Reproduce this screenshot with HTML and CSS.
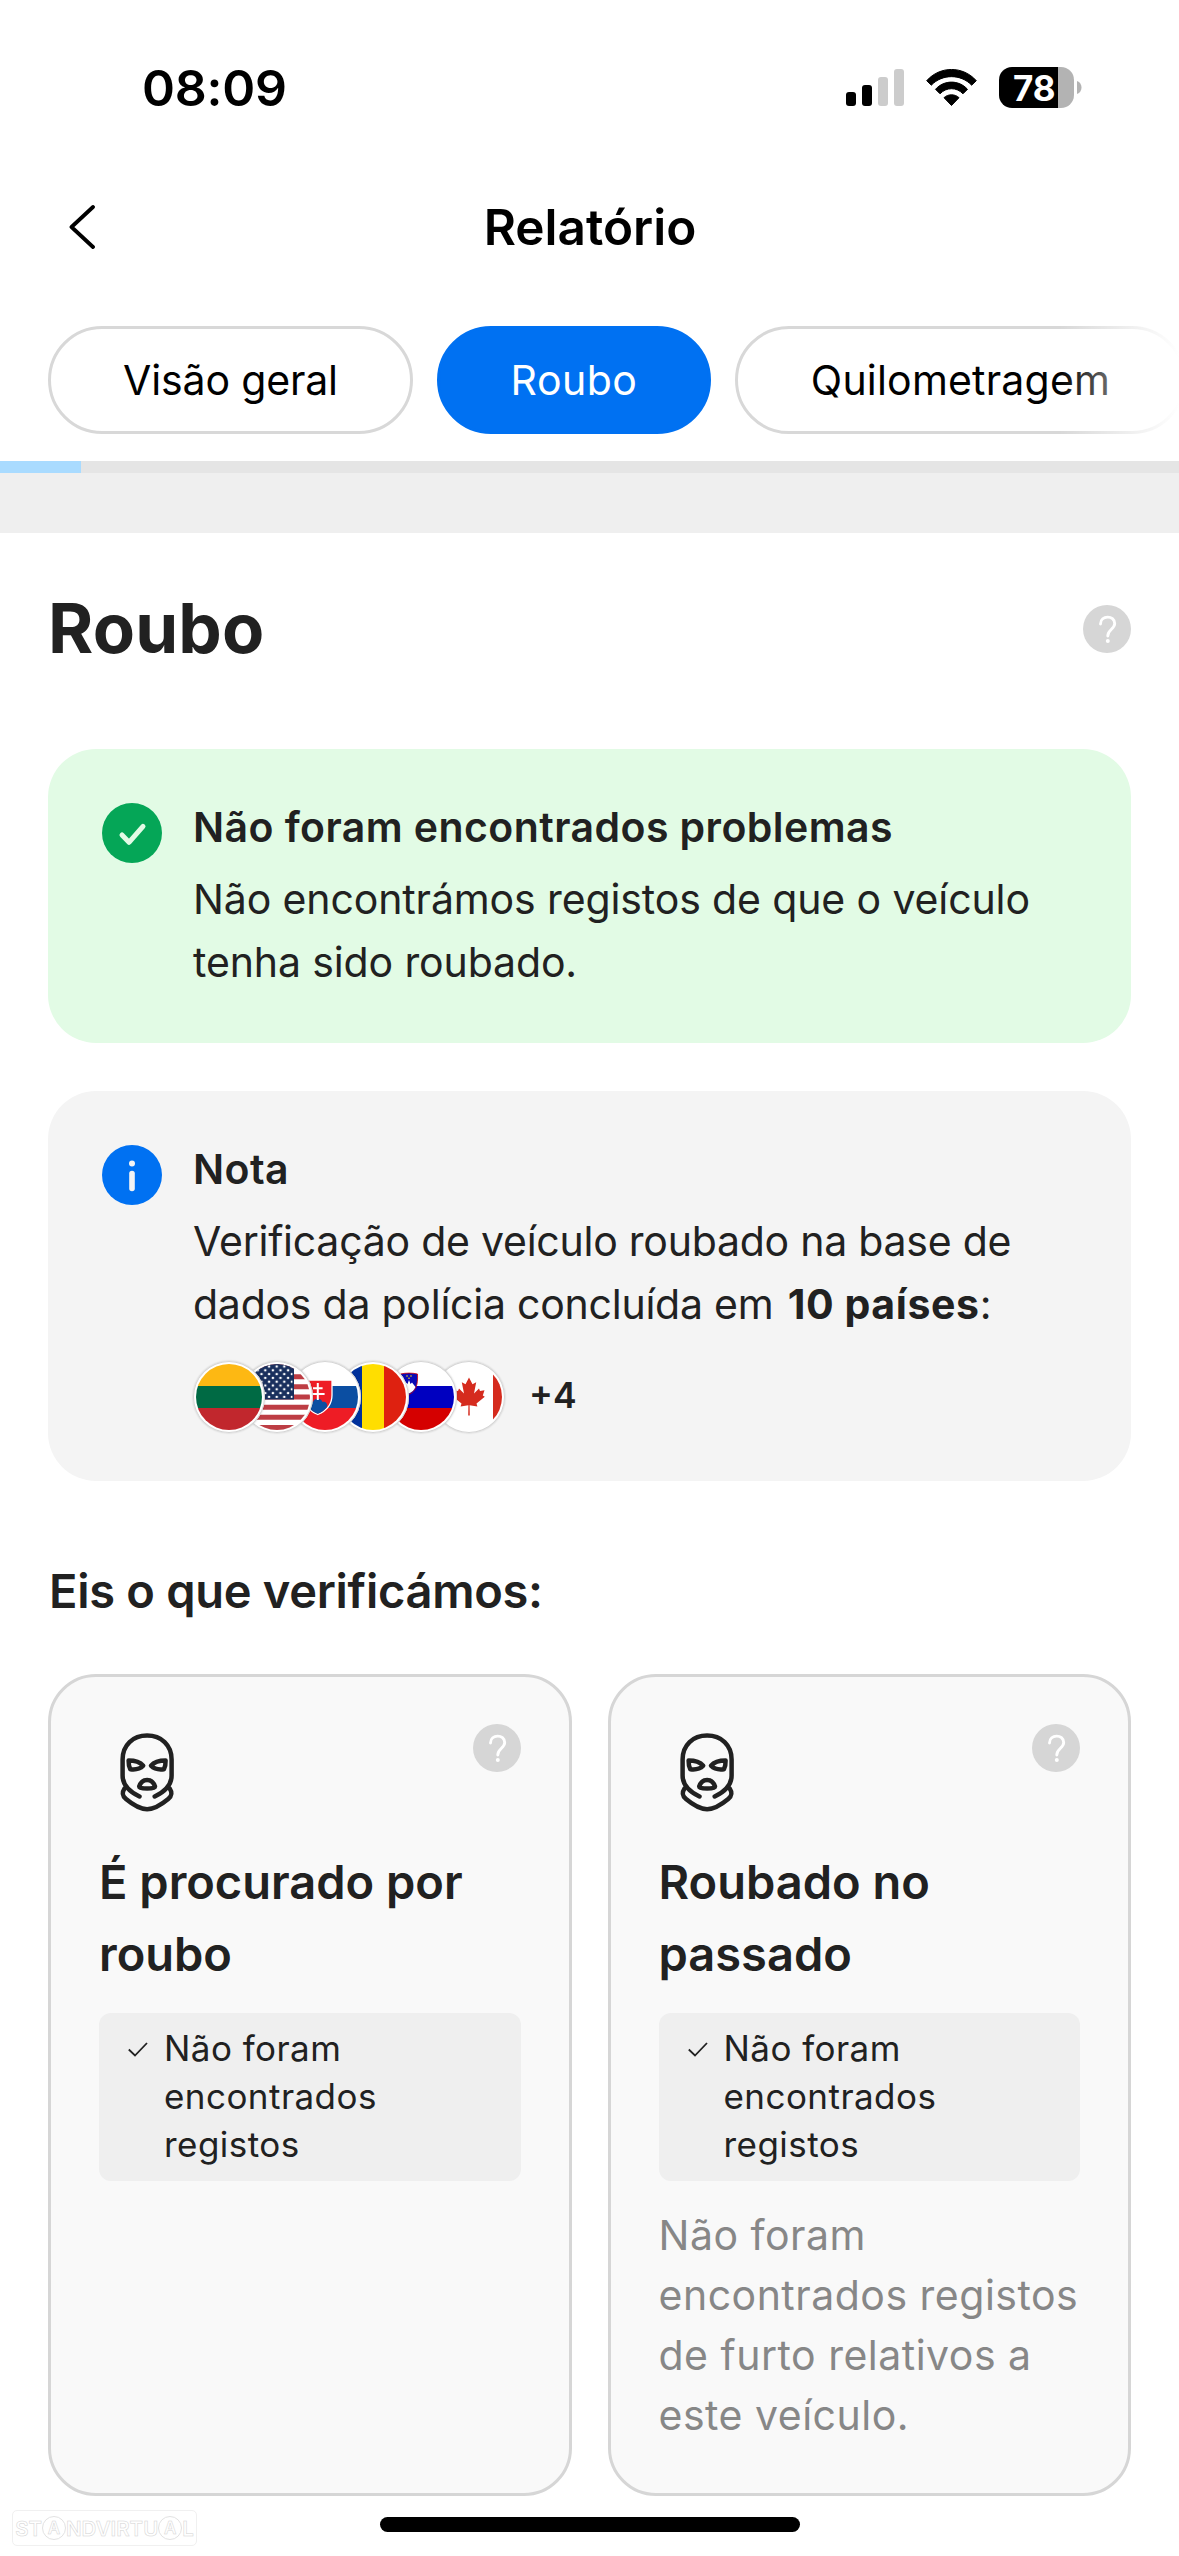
FILE: index.html
```
<!DOCTYPE html>
<html lang="pt">
<head>
<meta charset="utf-8">
<title>Relatório</title>
<link rel="stylesheet" href="styles.css">
</head>
<body>
<svg class="defs" width="0" height="0" aria-hidden="true">
  <defs>
    <clipPath id="flag-clip"><circle cx="36" cy="36" r="33"/></clipPath>
    <pattern id="stars" width="7.6" height="7.6" patternUnits="userSpaceOnUse" x="3.4" y="3.6">
      <circle cx="1.9" cy="1.9" r="1.3" fill="#fff"/><circle cx="5.7" cy="5.7" r="1.3" fill="#fff"/>
    </pattern>
    <symbol id="help" viewBox="0 0 48 48">
      <circle cx="24" cy="24" r="24" fill="#d6d6d6"/>
      <path d="M17.500 19C17.500 10 31.700 9.800 31.700 18.600C31.700 24.200 24.800 24.500 24.800 31" fill="none" stroke="#fff" stroke-width="2.900" stroke-linecap="round"/>
      <circle cx="24.800" cy="36" r="2" fill="#fff"/>
    </symbol>
    <symbol id="balaclava" viewBox="0 0 96 96">
      <g fill="none" stroke="#212121" stroke-width="4.500" stroke-linecap="round" stroke-linejoin="round">
        <path d="M40.500 72.500C31 68 23.600 61 23.600 51.500V35.500C23.600 21 34 11.500 48.100 11.500S72.600 21 72.600 35.500V51.500C72.600 61 65.200 68 55.700 72.500"/>
        <path d="M25.500 64.500C22.500 69 23.500 72 27 75C33 80 42 85.200 48.100 85.200S63.200 80 69.200 75C72.700 72 73.700 69 70.700 64.500"/>
        <path d="M29.600 36.500C35 36.500 41 38 44.200 41.700C41 45 36 45.800 31.300 45.200C30 42.500 29.500 39.500 29.600 36.500Z"/>
        <path d="M66.600 36.500C61.200 36.500 55.200 38 52 41.700C55.200 45 60.200 45.800 64.900 45.200C66.200 42.500 66.700 39.500 66.600 36.500Z"/>
        <path d="M40.200 62.500C41.500 58.500 44.500 56.100 48.100 56.100S54.700 58.500 56 62.500C56 65.300 40.200 65.300 40.200 62.500Z"/>
      </g>
    </symbol>
    <symbol id="tick" viewBox="0 0 20 15">
      <path d="M0.800 7.500L7 13.500L19 1" fill="none" stroke="#212121" stroke-width="1.800"/>
    </symbol>
  </defs>
</svg>

<header class="topbar">
  <div class="status">
    <span class="time">08:09</span>
    <div class="indicators">
      <svg class="signal" viewBox="0 0 58 37">
        <rect x="0" y="23" width="10" height="14" rx="3"/>
        <rect x="16" y="16" width="10" height="21" rx="3"/>
        <rect x="32" y="8" width="10" height="29" rx="3" fill="#ccc"/>
        <rect x="48" y="0" width="10" height="37" rx="3" fill="#ccc"/>
      </svg>
      <svg class="wifi" viewBox="0 0 51 37">
        <path d="M0.700 11.700C14 -3.300 37 -3.300 50.300 11.700L45.700 16.200C34.800 4.800 16.200 4.800 5.300 16.200Z" stroke="#000" stroke-linejoin="round"/>
        <path d="M9.500 20.300C18.200 10.700 32.800 10.700 41.500 20.300L37 24.800C30.600 18 20.400 18 14 24.800Z" stroke="#000" stroke-linejoin="round"/>
        <path d="M18 28.700C22 24.800 29 24.800 33 28.700L25.500 36.500Z" stroke="#000" stroke-linejoin="round"/>
      </svg>
      <div class="battery">
        <span class="battery-level">78</span>
        <svg class="battery-nub" viewBox="0 0 5 13"><path d="M0 0C6 2 6 11 0 13Z" fill="#b3b3b3"/></svg>
      </div>
    </div>
  </div>
  <nav class="navbar">
    <svg class="back" viewBox="0 0 26 44"><path d="M24 2L2.500 22L24 42" fill="none" stroke="#000" stroke-width="3.800" stroke-linecap="round" stroke-linejoin="round"/></svg>
    <h1 class="nav-title">Relatório</h1>
  </nav>
  <div class="tabs">
    <span class="tab tab-overview">Visão geral</span>
    <span class="tab tab-active">Roubo</span>
    <span class="tab tab-mileage">Quilometragem</span>
  </div>
  <div class="progress"><div class="progress-value"></div></div>
</header>
<div class="divider"></div>

<main class="section">
  <div class="section-head">
    <h2 class="section-title">Roubo</h2>
    <svg class="help"><use href="#help"/></svg>
  </div>

  <div class="notice notice-ok">
    <svg class="notice-icon" viewBox="0 0 60 60"><circle cx="30" cy="30" r="30" fill="#05a657"/><path d="M20 32L27 39.300L41 23.300" fill="none" stroke="#e3fbe6" stroke-width="5" stroke-linecap="round" stroke-linejoin="round"/></svg>
    <div class="notice-text">
      <h3 class="notice-title">Não foram encontrados problemas</h3>
      <p class="notice-body">Não encontrámos registos de que o veículo tenha sido roubado.</p>
    </div>
  </div>

  <div class="notice notice-info">
    <svg class="notice-icon" viewBox="0 0 60 60"><circle cx="30" cy="30" r="30" fill="#0071f2"/><circle cx="30" cy="18.500" r="3" fill="#f4f4f4"/><rect x="27.200" y="25.700" width="5.600" height="20.600" rx="2.800" fill="#f4f4f4"/></svg>
    <div class="notice-text">
      <h3 class="notice-title">Nota</h3>
      <p class="notice-body notice-body-tight">Verificação de veículo roubado na base de dados da polícia concluída em <b>10 países</b>:</p>
      <div class="flags">
        <svg class="flag" viewBox="0 0 72 72"><g clip-path="url(#flag-clip)"><path fill="#fdb813" d="M0 0h72v25H0z"/><path fill="#006a44" d="M0 25h72v22H0z"/><path fill="#c1272d" d="M0 47h72v25H0z"/></g></svg>
        <svg class="flag" viewBox="0 0 72 72"><g clip-path="url(#flag-clip)"><path fill="#fff" d="M0 0h72v72H0z"/><path stroke="#bd3d44" stroke-width="5.080" d="M0 5.500h72M0 15.700h72M0 25.800h72M0 36h72M0 46.200h72M0 56.300h72M0 66.500h72"/><path fill="#192f5d" d="M0 0h53v38.500H0z"/><path fill="url(#stars)" d="M0 3h51.500v34H0z"/></g></svg>
        <svg class="flag" viewBox="0 0 72 72"><g clip-path="url(#flag-clip)"><path fill="#fff" d="M0 0h72v25H0z"/><path fill="#0b4ea2" d="M0 25h72v22H0z"/><path fill="#ee1c25" d="M0 47h72v25H0z"/><path fill="#ee1c25" stroke="#fff" stroke-width="1.300" d="M14.500 19H43V34C43 44 37 50 28.800 53.500C20.500 50 14.500 44 14.500 34Z"/><path fill="#0b4ea2" d="M19.500 46C19 41 22.500 40 24 41C25 36.500 32.500 36.500 33.500 41C35 40 39 41 38 46C35.500 49.500 32 51.500 28.800 52.700C25.500 51.500 22 49.500 19.500 46Z"/><path stroke="#fff" stroke-width="2" d="M28.800 22V39M24 27.200H33.600M22 33H35.600"/></g></svg>
        <svg class="flag" viewBox="0 0 72 72"><g clip-path="url(#flag-clip)"><path fill="#00319c" d="M0 0h25v72H0z"/><path fill="#ffde00" d="M25 0h22v72H25z"/><path fill="#de2110" d="M47 0h25v72H47z"/></g></svg>
        <svg class="flag" viewBox="0 0 72 72"><g clip-path="url(#flag-clip)"><path fill="#fff" d="M0 0h72v25H0z"/><path fill="#0000c0" d="M0 25h72v22H0z"/><path fill="#d50000" d="M0 47h72v25H0z"/><path fill="#0a0ab5" stroke="#d50000" stroke-width="0.800" d="M15.500 13C21 11.800 27 11.800 32.500 13C33 24 31 30 24 33.500C17 30 15 24 15.500 13Z"/><path fill="#fff" d="M17.500 26L21 21.500L22.500 23L24 19L25.500 23L27 21.500L30.500 26C29 29.500 27 31 24 32.500C21 31 19 29.500 17.500 26Z"/><g fill="#fd0"><circle cx="22" cy="15" r="0.800"/><circle cx="26" cy="15" r="0.800"/><circle cx="24" cy="17.300" r="0.800"/></g></g></svg>
        <svg class="flag" viewBox="0 0 72 72"><g clip-path="url(#flag-clip)"><path fill="#fff" d="M0 0h72v72H0z"/><path fill="#d52b1e" d="M0 0h12v72H0zM60 0h12v72H60zM36 16.500L32.500 23.200L28.800 21.300L31 32.500L26 27.500L25 30L20.500 29.200L22.200 34.500L20.200 35.800L28.500 42.500L27.600 45.500L35.400 44.200L35.200 54.500H36.800L36.600 44.200L44.400 45.500L43.500 42.500L51.800 35.800L49.800 34.500L51.500 29.200L47 30L46 27.500L41 32.500L43.200 21.300L39.500 23.200Z"/></g></svg>
        <span class="flags-more">+4</span>
      </div>
    </div>
  </div>

  <h3 class="checks-title">Eis o que verificámos:</h3>

  <div class="cards">
    <article class="card">
      <div class="card-head">
        <svg class="card-icon"><use href="#balaclava"/></svg>
        <svg class="help"><use href="#help"/></svg>
      </div>
      <h4 class="card-title">É procurado por roubo</h4>
      <div class="chip"><svg class="chip-tick"><use href="#tick"/></svg><span>Não foram encontrados registos</span></div>
    </article>
    <article class="card">
      <div class="card-head">
        <svg class="card-icon"><use href="#balaclava"/></svg>
        <svg class="help"><use href="#help"/></svg>
      </div>
      <h4 class="card-title">Roubado no passado</h4>
      <div class="chip"><svg class="chip-tick"><use href="#tick"/></svg><span>Não foram encontrados registos</span></div>
      <p class="card-note">Não foram encontrados registos de furto relativos a este veículo.</p>
    </article>
  </div>
</main>

<div class="watermark">ST<span class="ring">A</span>NDVIRTU<span class="ring">A</span>L</div>
<div class="home-indicator"></div>
</body>
</html>
```
FILE: styles.css
```
* { box-sizing: border-box; margin: 0; padding: 0; }

body {
  position: relative;
  width: 1179px;
  height: 2556px;
  overflow: hidden;
  background: #fff;
  color: #212121;
  font-family: Inter, "Liberation Sans", sans-serif;
}

svg { display: block; flex: none; }
.defs { position: absolute; }

/* Status bar */
.topbar { color: #000; }
.status {
  display: flex;
  align-items: center;
  justify-content: space-between;
  height: 175px;
  padding: 0 97px 0 142px;
}
.time { padding-top: 1px; font-size: 50px; font-weight: 600; line-height: 60px; letter-spacing: -0.2px; }
.indicators { display: flex; align-items: center; }
.signal { width: 58px; height: 37px; }
.wifi { width: 51px; height: 37px; margin-left: 22px; }
.battery { display: flex; align-items: center; gap: 3px; margin-left: 22px; }
.battery-level {
  width: 75px;
  height: 41px;
  padding-left: 14px;
  border-radius: 13px;
  background: linear-gradient(90deg, #000 59px, #b3b3b3 59px);
  color: #fff;
  font-size: 35px;
  font-weight: 700;
  line-height: 42px;
}
.battery-nub { width: 5px; height: 13px; }

/* Navigation */
.navbar {
  display: grid;
  grid-template-columns: 26px 1fr 26px;
  align-items: center;
  height: 104px;
  padding: 0 69px;
}
.back { width: 26px; height: 44px; }
.nav-title { padding-left: 1px; text-align: center; font-size: 49.5px; font-weight: 600; line-height: 60px; }

.tabs {
  position: relative;
  display: flex;
  gap: 24px;
  padding: 47px 0 27px 48px;
  overflow: hidden;
}
.tabs::after {
  content: "";
  position: absolute;
  inset: 0 0 0 auto;
  width: 120px;
  background: linear-gradient(90deg, rgba(255, 255, 255, 0), #fff);
}
.tab {
  display: flex;
  flex: none;
  align-items: center;
  justify-content: center;
  height: 108px;
  border: 3px solid #d8d8d8;
  border-radius: 54px;
  font-size: 41px;
  white-space: nowrap;
}
.tab-overview { width: 365px; letter-spacing: -0.15px; }
.tab-active { width: 274px; border-color: #0071f2; background: #0071f2; color: #fff; letter-spacing: 0.5px; }
.tab-mileage { width: 451px; letter-spacing: 0.2px; }

.progress { height: 12px; background: #e5e5e5; }
.progress-value { width: 81px; height: 12px; background: #a9dbff; }
.divider { height: 60px; background: #efefef; }

/* Section */
.section { padding: 72px 48px 0; }
.section-head { display: flex; align-items: center; justify-content: space-between; height: 48px; }
.section-title { margin-top: -3px; font-size: 69px; font-weight: 700; line-height: 84px; letter-spacing: 0.2px; }
.help { width: 48px; height: 48px; }

.notice { display: flex; gap: 31px; padding: 48px 53px 0 54px; border-radius: 48px; }
.notice-ok { height: 294px; margin-top: 96px; background: #e2fbe5; }
.notice-info { height: 390px; margin-top: 48px; background: #f4f4f4; }
.notice-icon { width: 60px; height: 60px; margin-top: 6px; }
.notice-text { flex: 1; }
.notice-title { font-size: 41px; font-weight: 600; line-height: 60px; letter-spacing: 0.43px; }
.notice-body { margin-top: 10.5px; font-size: 41px; line-height: 63px; letter-spacing: -0.12px; }
.notice-body-tight { letter-spacing: -0.24px; }
.notice-body b { margin-left: 3px; font-weight: 700; letter-spacing: 0.6px; }

.flags { display: flex; align-items: center; margin-top: 25px; }
.flag {
  position: relative;
  width: 72px;
  height: 72px;
  margin-right: -24px;
  border-radius: 50%;
  background: #fff;
  box-shadow: inset 0 0 0 1px #d4d4d4, 0 0 2px rgba(0, 0, 0, 0.22);
}
.flag:nth-child(1) { z-index: 6; }
.flag:nth-child(2) { z-index: 5; }
.flag:nth-child(3) { z-index: 4; }
.flag:nth-child(4) { z-index: 3; }
.flag:nth-child(5) { z-index: 2; }
.flag:nth-child(6) { z-index: 1; margin-right: 24px; }
.flags-more { margin-top: -2px; font-size: 35.5px; font-weight: 600; line-height: 48px; }

.checks-title { margin: 81px 0 0 1px; font-size: 47px; font-weight: 600; line-height: 60px; letter-spacing: -0.28px; }
.notice-info + .checks-title { margin-top: 80px; }

/* Cards */
.cards { display: grid; grid-template-columns: 1fr 1fr; gap: 36px; margin-top: 53px; }
.card {
  height: 822px;
  padding: 47px 48px 0;
  border: 3px solid #d6d6d6;
  border-radius: 48px;
  background: #f9f9f9;
}
.card-head { display: flex; align-items: flex-start; justify-content: space-between; }
.card-icon { width: 96px; height: 96px; }
.card-title { margin-top: 26px; font-size: 47px; font-weight: 600; line-height: 72px; }
.chip {
  display: flex;
  gap: 16px;
  margin-top: 23px;
  padding: 11px 12px 13px 29px;
  border-radius: 12px;
  background: #efefef;
  font-size: 35px;
  line-height: 48px;
  letter-spacing: 0.45px;
}
.chip-tick { width: 20px; height: 15px; margin-top: 18px; }
.card-note { margin: 24px -6px 0 0; color: #878787; font-size: 41px; line-height: 60px; letter-spacing: 0.5px; }

/* Overlays */
.watermark {
  position: absolute;
  left: 12px;
  top: 2510px;
  display: flex;
  align-items: center;
  justify-content: center;
  width: 185px;
  height: 36px;
  border: 1px solid #f0f0f0;
  border-radius: 5px;
  color: #fff;
  font-size: 20.5px;
  font-weight: 600;
  -webkit-text-stroke: 0.5px #d2d2d2;
}
.ring {
  display: flex;
  align-items: center;
  justify-content: center;
  width: 24px;
  height: 24px;
  border: 1px solid #e2e2e2;
  border-radius: 50%;
  font-size: 17px;
}
.home-indicator {
  position: absolute;
  left: 380px;
  top: 2517px;
  width: 420px;
  height: 15px;
  border-radius: 8px;
  background: #000;
}
```
